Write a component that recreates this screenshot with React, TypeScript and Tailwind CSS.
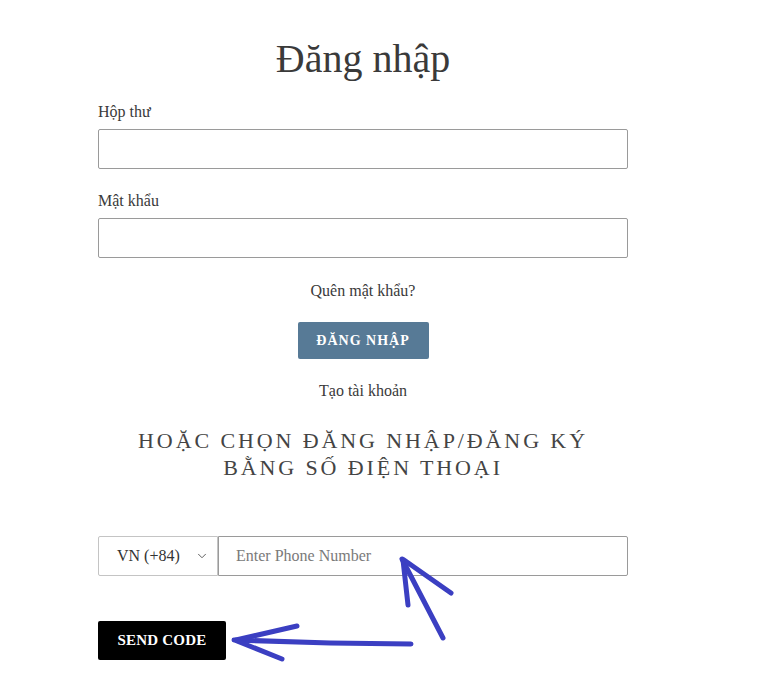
import React from "react";
import { ChevronDown } from "lucide-react";

export default function App() {
  return (
    <div
      className="relative w-[765px] h-[693px] bg-white overflow-hidden text-[#333]"
      style={{ fontFamily: '"Liberation Serif", "Times New Roman", serif' }}
    >
      <div className="ml-[98px] w-[530px] pt-[35px]">
        <h1 className="text-center text-[40px] leading-[48px] text-[#3a3a3a] font-normal">
          Đăng nhập
        </h1>

        <label className="block mt-[19px] text-[16px] leading-[20px] text-[#3a3a3a]">Hộp thư</label>
        <input
          type="email"
          className="block mt-[7px] w-full h-[40px] border border-[#9a9a9a] rounded-[2px] px-3 outline-none"
        />

        <label className="block mt-[22px] text-[16px] leading-[20px] text-[#3a3a3a]">Mật khẩu</label>
        <input
          type="password"
          className="block mt-[7px] w-full h-[40px] border border-[#9a9a9a] rounded-[2px] px-3 outline-none"
        />

        <p className="mt-[23px] text-center text-[16px] leading-[20px] text-[#3a3a3a]">Quên mật khẩu?</p>

        <div className="mt-[21px] flex justify-center">
          <button className="w-[131px] h-[37px] bg-[#577a96] text-white text-[14px] font-bold tracking-[1px] rounded-[2px]">
            ĐĂNG NHẬP
          </button>
        </div>

        <p className="mt-[22px] text-center text-[16px] leading-[20px] text-[#3a3a3a]">Tạo tài khoản</p>

        <h2 className="mt-[26px] text-center text-[22px] leading-[27px] tracking-[2.9px] text-[#444] font-normal">
          HOẶC CHỌN ĐĂNG NHẬP/ĐĂNG KÝ
          <br />
          BẰNG SỐ ĐIỆN THOẠI
        </h2>

        <div className="mt-[55px] flex h-[40px]">
          <div className="w-[120px] h-full flex items-center justify-between pl-[18px] pr-[8px] border border-[#c4c4c4] rounded-l-[2px] text-[16px] text-[#333]">
            <span>VN (+84)</span>
            <ChevronDown size={14} strokeWidth={1.6} className="text-[#555]" />
          </div>
          <input
            type="tel"
            placeholder="Enter Phone Number"
            className="flex-1 h-full border border-[#9a9a9a] rounded-r-[2px] px-[17px] text-[16px] placeholder:text-[#7a7a7a] outline-none"
          />
        </div>

        <button className="mt-[45px] w-[128px] h-[39px] bg-black text-white text-[15px] font-bold tracking-[0.2px] rounded-[2px]">
          SEND CODE
        </button>
      </div>

      {/* hand-drawn marker arrows */}
      <svg
        className="absolute inset-0 pointer-events-none"
        width="765"
        height="693"
        viewBox="0 0 765 693"
        fill="none"
        stroke="#3b3fc2"
        strokeWidth="5"
        strokeLinecap="round"
        strokeLinejoin="round"
      >
        <path d="M443 638 L402 559" />
        <path d="M408 605 L403 560" />
        <path d="M451 593 L404 560" />
        <path d="M411 644 L330 643 L234 640" />
        <path d="M297 626 L236 640" />
        <path d="M282 659 L237 641" />
      </svg>
    </div>
  );
}
